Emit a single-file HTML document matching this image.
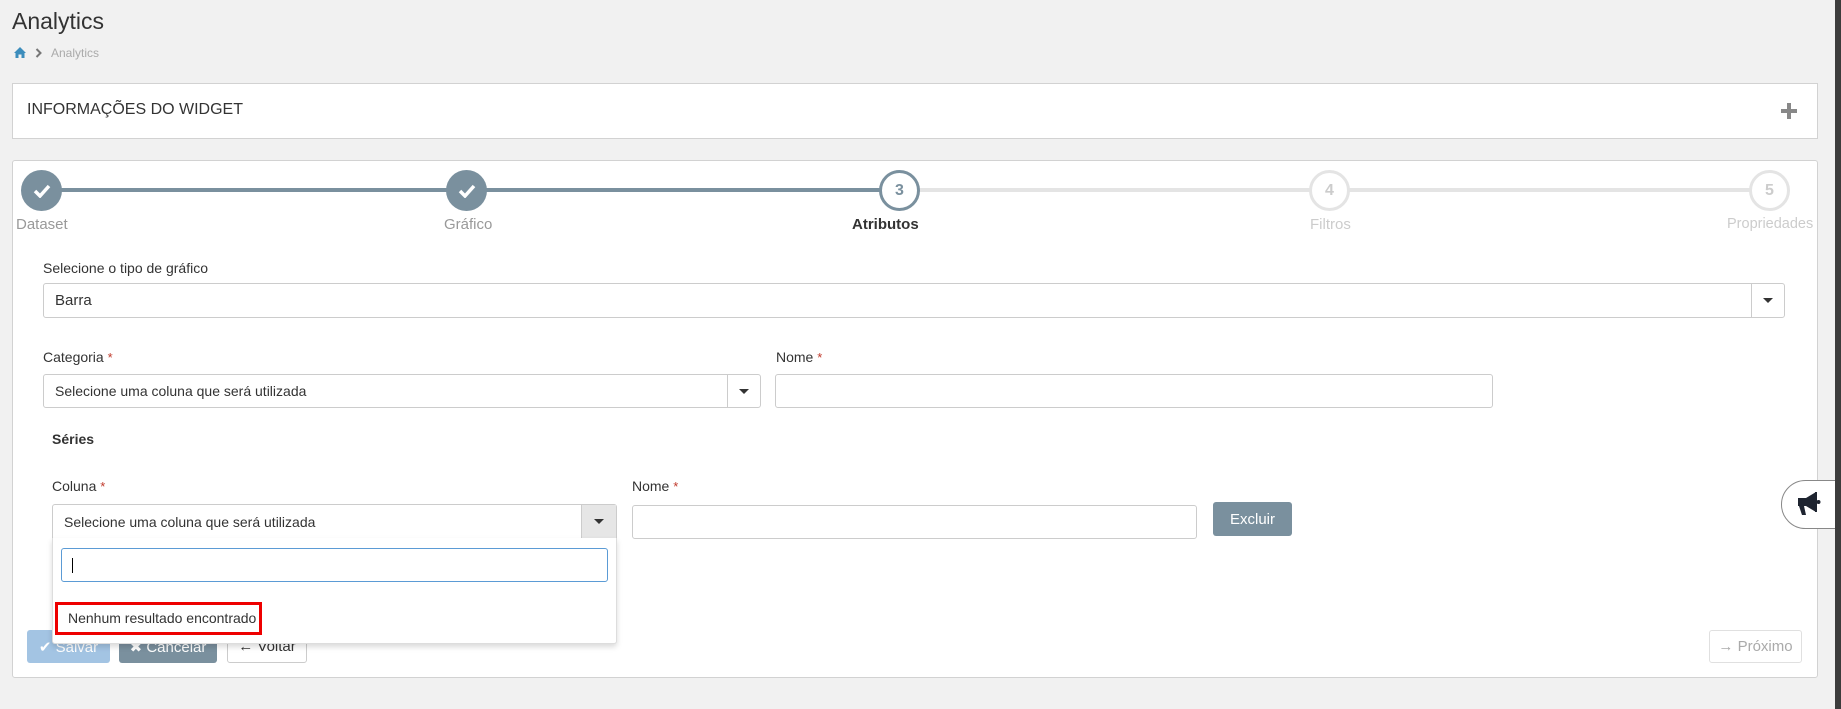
<!DOCTYPE html>
<html><head><meta charset="utf-8"><style>
*{box-sizing:border-box;margin:0;padding:0}
body{width:1841px;height:709px;background:#f1f1f1;font-family:"Liberation Sans",Arial,sans-serif;color:#333;position:relative;overflow:hidden}
.a{position:absolute}
.panel{position:absolute;background:#fff;border:1px solid #d2d2d2}
.lbl{position:absolute;font-size:15px;color:#333}
.req{color:#c0392b;font-size:13px}
.inp{position:absolute;background:#fff;border:1px solid #ccc;border-radius:3px;font-size:15px;color:#333;padding-left:11px;display:flex;align-items:center}
.caret{position:absolute;right:0;top:0;bottom:0;width:33px;border-left:1px solid #ccc;display:flex;align-items:center;justify-content:center}
.caret:after{content:"";border-left:5px solid transparent;border-right:5px solid transparent;border-top:5px solid #333}
.circ{position:absolute;width:41px;height:41px;border-radius:50%;top:170px;display:flex;align-items:center;justify-content:center;font-size:16px;font-weight:bold}
.done{background:#7a909e}
.step{position:absolute;top:216px;font-size:15px;color:#999}
.btn{position:absolute;border-radius:3px;font-size:15px;display:flex;align-items:center;justify-content:center}
</style></head><body>
<div class="a" style="left:12px;top:8px;font-size:23px;color:#333">Analytics</div>
<svg class="a" style="left:13px;top:46px" width="14" height="13" viewBox="0 0 14 13"><path d="M7 1 L1 7 L2.5 7 L2.5 12 L5.5 12 L5.5 8.5 L8.5 8.5 L8.5 12 L11.5 12 L11.5 7 L13 7 Z" fill="#3c8dbc"/></svg>
<svg class="a" style="left:35px;top:48px" width="7" height="10" viewBox="0 0 7 10"><path d="M1.5 1 L5.5 5 L1.5 9" stroke="#777" stroke-width="2" fill="none"/></svg>
<div class="a" style="left:51px;top:46px;font-size:12px;color:#aaa">Analytics</div>

<div class="panel" style="left:12px;top:83px;width:1806px;height:56px"></div>
<div class="a" style="left:27px;top:101px;font-size:16px;color:#333">INFORMAÇÕES DO WIDGET</div>
<div class="a" style="left:1781px;top:103px;width:16px;height:16px"><div class="a" style="left:6px;top:0;width:4px;height:16px;background:#888"></div><div class="a" style="left:0;top:6px;width:16px;height:4px;background:#888"></div></div>

<div class="panel" style="left:12px;top:160px;width:1806px;height:518px;border-radius:3px"></div>
<div class="a" style="left:41px;top:188px;width:858px;height:4px;background:#7a909e"></div>
<div class="a" style="left:899px;top:188px;width:870px;height:4px;background:#e4e4e4"></div>
<div class="circ done" style="left:21px"><svg width="18" height="14" viewBox="0 0 18 14"><path d="M2 7 L7 12 L16 2" stroke="#fff" stroke-width="3.5" fill="none"/></svg></div>
<div class="circ done" style="left:446px"><svg width="18" height="14" viewBox="0 0 18 14"><path d="M2 7 L7 12 L16 2" stroke="#fff" stroke-width="3.5" fill="none"/></svg></div>
<div class="circ" style="left:879px;background:#fff;border:3px solid #7a909e;color:#7a909e">3</div>
<div class="circ" style="left:1309px;background:#fff;border:3px solid #e4e4e4;color:#ccc">4</div>
<div class="circ" style="left:1749px;background:#fff;border:3px solid #e4e4e4;color:#ccc">5</div>
<div class="step" style="left:16px">Dataset</div>
<div class="step" style="left:444px">Gráfico</div>
<div class="step" style="left:852px;color:#333;font-weight:bold">Atributos</div>
<div class="step" style="left:1310px;color:#ccc">Filtros</div>
<div class="step" style="left:1727px;color:#ccc;font-size:14.5px">Propriedades</div>

<div class="lbl" style="left:43px;top:260px;font-size:14px">Selecione o tipo de gráfico</div>
<div class="inp" style="left:43px;top:283px;width:1742px;height:35px">Barra<div class="caret"></div></div>

<div class="lbl" style="left:43px;top:349px;font-size:14px">Categoria <span class="req">*</span></div>
<div class="inp" style="left:43px;top:374px;width:718px;height:34px;font-size:14px">Selecione uma coluna que será utilizada<div class="caret"></div></div>
<div class="lbl" style="left:776px;top:349px;font-size:14px">Nome <span class="req">*</span></div>
<div class="inp" style="left:775px;top:374px;width:718px;height:34px"></div>

<div class="lbl" style="left:52px;top:431px;font-size:14px;font-weight:bold">Séries</div>

<div class="lbl" style="left:52px;top:478px;font-size:14px">Coluna <span class="req">*</span></div>
<div class="inp" style="left:52px;top:504px;width:565px;height:35px;font-size:14px;border-radius:3px 3px 0 0">Selecione uma coluna que será utilizada<div class="caret" style="background:#e6e6e6;width:35px"></div></div>
<div class="lbl" style="left:632px;top:478px;font-size:14px">Nome <span class="req">*</span></div>
<div class="inp" style="left:632px;top:505px;width:565px;height:34px"></div>
<div class="btn" style="left:1213px;top:502px;width:79px;height:34px;background:#7a909e;color:#fff">Excluir</div>

<div class="btn" style="left:27px;top:630px;width:83px;height:33px;background:#a3c4e3;color:#fff">✔ Salvar</div>
<div class="btn" style="left:119px;top:630px;width:98px;height:33px;background:#7a909e;color:#fff">✖ Cancelar</div>
<div class="btn" style="left:227px;top:630px;width:80px;height:33px;background:#fff;border:1px solid #ccc;color:#333">← Voltar</div>

<div class="a" style="left:52px;top:538px;width:565px;height:106px;background:#fff;border:1px solid #ddd;border-top:none;box-shadow:0 3px 6px rgba(0,0,0,.15);border-radius:0 0 3px 3px"></div>
<div class="a" style="left:61px;top:548px;width:547px;height:34px;border:1px solid #5b9bd5;border-radius:3px;background:#fff"><div class="a" style="left:10px;top:9px;width:1px;height:15px;background:#000"></div></div>
<div class="a" style="left:55px;top:602px;width:207px;height:33px;border:3px solid #e00"></div>
<div class="a" style="left:68px;top:610px;font-size:14px;color:#333">Nenhum resultado encontrado</div>

<div class="btn" style="left:1709px;top:630px;width:93px;height:33px;background:#fff;border:1px solid #e0e0e0;color:#aaa">→ Próximo</div>

<div class="a" style="left:1781px;top:480px;width:70px;height:49px;background:#fff;border:1px solid #888;border-radius:25px 0 0 25px"></div>
<svg class="a" style="left:1796px;top:491px" width="28" height="26" viewBox="0 0 28 26"><path d="M2 7 H10 L20 1 V21 L10 15 H8 L10 24 H6 L3 15 H2 Z" fill="#1e2430"/><path d="M20 1 L20 21" stroke="#1e2430" stroke-width="2"/><circle cx="22.5" cy="11" r="2" fill="#1e2430"/></svg>
<div class="a" style="left:1835px;top:0;width:6px;height:709px;background:#3c3c3c"></div>
</body></html>
